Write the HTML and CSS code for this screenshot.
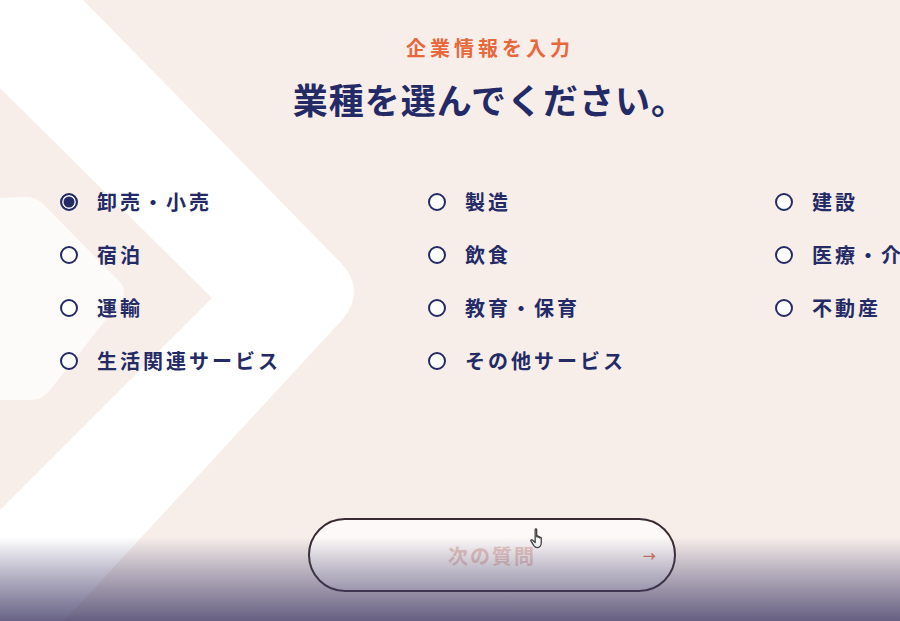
FILE: index.html
```html
<!DOCTYPE html>
<html lang="ja">
<head>
  <meta charset="UTF-8" />
  <meta name="viewport" content="width=device-width, initial-scale=1.0" />
  <title>企業情報を入力</title>
  <link rel="stylesheet" href="styles.css">
</head>
<body>
  <svg class="backdrop" viewBox="0 0 900 621" width="900" height="621" aria-hidden="true">
    <path class="chevron" d="M0,0 L83,0 L340,262 Q367,290 342,320 L64,621 L0,621 L0,510 L212,298 L0,88 Z" />
    <path class="chevron-inner" d="M0,198 L24,197 Q36,196 44,205 L120,282 Q128,292 120,302 L50,390 Q42,400 30,400 L0,400 Z" />
  </svg>

  <main class="page">
    <p class="step">企業情報を入力</p>
    <h1 class="title">業種を選んでください。</h1>

    <div class="options">
      <label class="option"><span class="radio checked"></span>卸売・小売</label>
      <label class="option"><span class="radio"></span>製造</label>
      <label class="option"><span class="radio"></span>建設</label>
      <label class="option"><span class="radio"></span>宿泊</label>
      <label class="option"><span class="radio"></span>飲食</label>
      <label class="option"><span class="radio"></span>医療・介護</label>
      <label class="option"><span class="radio"></span>運輸</label>
      <label class="option"><span class="radio"></span>教育・保育</label>
      <label class="option"><span class="radio"></span>不動産</label>
      <label class="option"><span class="radio"></span>生活関連サービス</label>
      <label class="option"><span class="radio"></span>その他サービス</label>
    </div>

    <div class="actions">
      <button class="next-btn" disabled>
        <span class="next-label">次の質問</span>
        <span class="next-arrow">→</span>
      </button>
      <svg class="cursor" viewBox="0 0 20 24" width="19" height="24" aria-hidden="true">
        <path d="M6.5 2.2c0-1 1.6-1 1.6 0v7.3c0-1 1.6-1 1.6 0v0.8c0-1 1.6-1 1.6 0v0.7c0-1 1.6-1 1.6 0v5.2c0 2.6-1.8 4.8-4.6 4.8H8.6c-1.6 0-2.6-0.8-3.5-2.1L2.1 14.2c-0.6-0.9 0.5-1.9 1.4-1.1l3 2.6z" />
      </svg>
    </div>
  </main>

  <div class="player-shade"></div>
</body>
</html>
```

FILE: styles.css
```css
body {
  margin: 0;
  height: 621px;
  background-color: #f7eeea;
  font-family: "Noto Sans CJK JP", "Noto Sans", sans-serif;
  color: #232a66;
  overflow: hidden;
  position: relative;
}

.backdrop {
  position: absolute;
  top: 0;
  left: 0;
  z-index: 0;
}

.chevron {
  fill: #ffffff;
}

.chevron-inner {
  fill: #fdfbfa;
}

.page {
  position: relative;
  z-index: 1;
  width: 980px;
  padding-top: 36px;
  text-align: center;
}

.step {
  margin: 0;
  font-size: 20px;
  line-height: 24px;
  font-weight: 700;
  letter-spacing: 4px;
  color: #e8683c;
}

.title {
  margin: 15px 0 0;
  font-size: 35px;
  line-height: 48px;
  font-weight: 700;
  letter-spacing: 1px;
  color: #232a66;
}

.options {
  display: grid;
  grid-template-columns: 368px 347px 1fr;
  row-gap: 25px;
  margin-top: 65px;
  padding-left: 60px;
  text-align: left;
}

.option {
  display: flex;
  align-items: center;
  gap: 19px;
  font-size: 20px;
  line-height: 28px;
  font-weight: 700;
  letter-spacing: 3px;
  white-space: nowrap;
  cursor: pointer;
}

.radio {
  flex: none;
  width: 14px;
  height: 14px;
  border: 2px solid #232a66;
  border-radius: 50%;
  background-color: #ffffff;
}

.radio.checked {
  background-color: #232a66;
  box-shadow: inset 0 0 0 1.5px #ffffff;
}

.actions {
  position: relative;
  margin-top: 143px;
  display: flex;
  justify-content: center;
}

.next-btn {
  position: relative;
  width: 368px;
  height: 74px;
  margin-left: 4px;
  border: 2px solid #3a2b33;
  border-radius: 37px;
  background-color: #fdf9f8;
  font-family: inherit;
  display: flex;
  align-items: center;
  justify-content: center;
}

.next-label {
  font-size: 20px;
  font-weight: 700;
  letter-spacing: 2px;
  color: #ecc9c2;
}

.next-arrow {
  position: absolute;
  right: 18px;
  top: 50%;
  transform: translateY(-50%);
  font-size: 13px;
  font-weight: 700;
  color: #dc7a58;
}

.cursor {
  position: absolute;
  left: 529px;
  top: 9px;
}

.cursor path {
  fill: #ffffff;
  stroke: #444444;
  stroke-width: 1.4;
  stroke-linejoin: round;
}

.player-shade {
  position: absolute;
  left: 0;
  right: 0;
  bottom: 0;
  height: 84px;
  z-index: 5;
  pointer-events: none;
  background: linear-gradient(to bottom, rgba(70, 64, 108, 0) 0%, rgba(70, 64, 108, 0.35) 40%, rgba(66, 60, 104, 0.8) 100%);
}
```
